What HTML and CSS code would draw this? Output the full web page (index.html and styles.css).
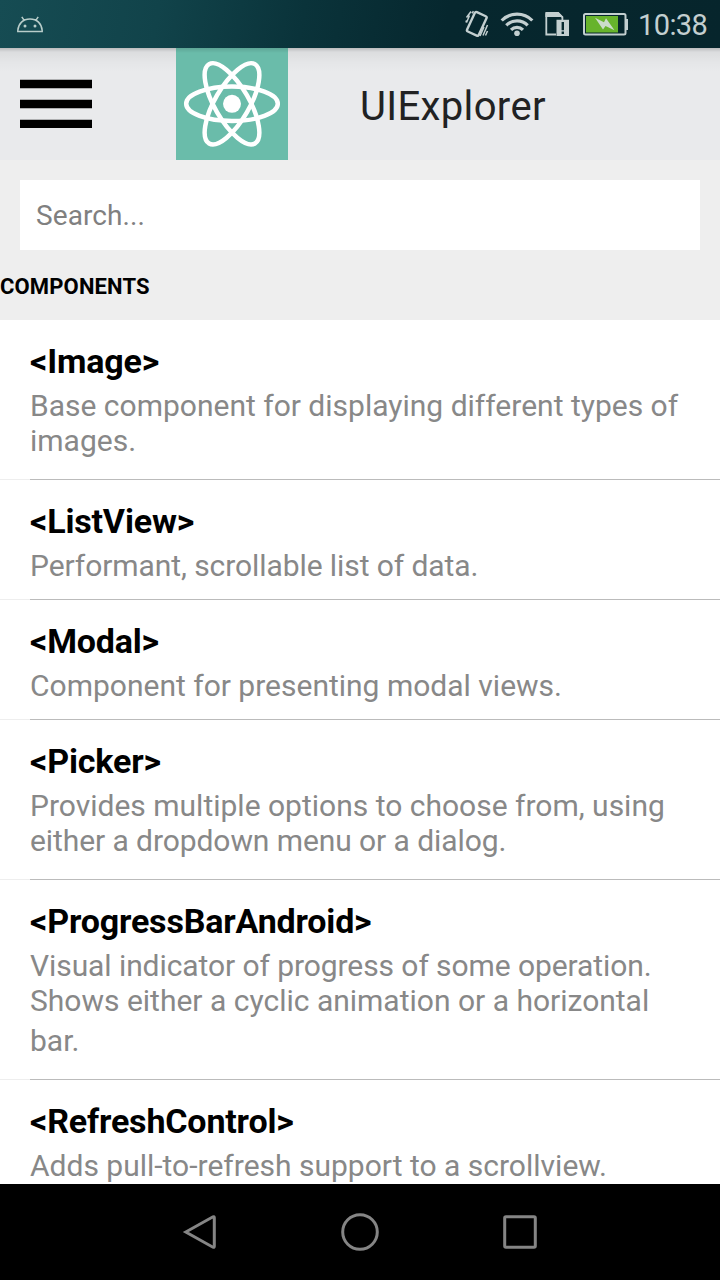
FILE: index.html
```html
<!DOCTYPE html>
<html lang="en">
<head>
<meta charset="utf-8">
<title>UIExplorer</title>
<link rel="stylesheet" href="styles.css">
</head>
<body>
<div class="screen">
  <header class="status">
    <svg class="status-icon" width="48" height="48" viewBox="0 0 48 48" fill="none" stroke="#b9cdca" stroke-width="1.500">
      <path d="M17.800 31.400V30.500C18.400 23.500 23 19 30 19s11.600 4.500 12.200 11.500v.9zM24 20.200l-2.200-3.400M36 20.200l2.200-3.400"/>
      <circle cx="25" cy="26" r="1.500" fill="#b9cdca" stroke="none"/>
      <circle cx="35" cy="26" r="1.500" fill="#b9cdca" stroke="none"/>
    </svg>
    <div class="status-right">
      <svg width="164" height="48" viewBox="464 0 164 48" fill="none" stroke="#c3cfd0">
        <rect x="470.400" y="13.200" width="12.800" height="21.400" rx="1.500" transform="rotate(25 476.800 23.900)" stroke-width="2.400"/>
        <path d="M471 11.500l-4.500 6M473.500 11.200l-1.500 2M466.500 20.500l-.5 2M469.500 15.500l-3 7M487.500 25l-4.500 10.500M487.500 31l-2 4.500M484 27l-4 9" stroke-width="1.500"/>
        <g stroke-width="3.200">
          <path d="M501.700 20.500a21.500 21.500 0 0 1 30.600 0"/>
          <path d="M506.300 25.300a15 15 0 0 1 21.400 0"/>
          <path d="M511 29.800a8.500 8.500 0 0 1 12 0"/>
        </g>
        <circle cx="517" cy="33.300" r="2.800" fill="#c3cfd0" stroke="none"/>
        <path d="M556 34.500h-9.700V13h11.700l4.400 4.400V20" stroke-width="1.800"/>
        <path d="M547 12h11.500l5 5H545.400v-3.400zM556.500 19.800H569V36h-12.500z" fill="#c3cfd0" stroke="none"/>
        <path d="M562.800 22v8.200M562.800 31.600v2.400" stroke="#06282e" stroke-width="2.400"/>
        <rect x="584" y="14" width="41.500" height="20.500" rx="1.500" stroke-width="2"/>
        <path d="M626 19h2v11h-2z" fill="#c3cfd0" stroke="none"/>
        <path d="M586 16h32v16.500h-32z" fill="#67b32c" stroke="none"/>
        <path d="M595 17.800l9 4.400 2-4 8.500 12-9-4.200-2.500 3.500z" fill="#cbdcc9" stroke="none"/>
      </svg>
      <span class="clock">10:38</span>
    </div>
  </header>

  <nav class="toolbar">
    <svg class="menu" width="72" height="52" viewBox="0 0 72 52">
      <path d="M0 3.700h72v8.500H0zM0 23.700h72v8.500H0zM0 43.700h72V52H0z"/>
    </svg>
    <svg class="logo" width="112" height="112" viewBox="0 0 112 112" fill="none" stroke="#fff" stroke-width="4.500">
      <ellipse cx="56" cy="55.800" rx="45.800" ry="17.200"/>
      <ellipse cx="56" cy="55.800" rx="45.800" ry="17.200" transform="rotate(60 56 55.800)"/>
      <ellipse cx="56" cy="55.800" rx="45.800" ry="17.200" transform="rotate(120 56 55.800)"/>
      <circle cx="56" cy="55.800" r="9" fill="#fff" stroke="none"/>
    </svg>
    <h1 class="title">UIExplorer</h1>
  </nav>

  <main class="content">
    <div class="search-area"><div class="search"><span>Search...</span></div></div>
    <h2 class="section"><span>COMPONENTS</span></h2>
    <section class="row">
      <h3><span>&lt;Image&gt;</span></h3>
      <p><span class="line">Base component for displaying different types of</span> <span class="line">images.</span></p>
    </section>
    <section class="row single">
      <h3><span>&lt;ListView&gt;</span></h3>
      <p><span class="line tight">Performant, scrollable list of data.</span></p>
    </section>
    <section class="row single">
      <h3><span>&lt;Modal&gt;</span></h3>
      <p><span class="line">Component for presenting modal views.</span></p>
    </section>
    <section class="row">
      <h3><span>&lt;Picker&gt;</span></h3>
      <p><span class="line">Provides multiple options to choose from, using</span> <span class="line tight">either a dropdown menu or a dialog.</span></p>
    </section>
    <section class="row">
      <h3><span>&lt;ProgressBarAndroid&gt;</span></h3>
      <p><span class="line tight">Visual indicator of progress of some operation.</span> <span class="line">Shows either a cyclic animation or a horizontal</span> <span class="line spaced">bar.</span></p>
    </section>
    <section class="row single">
      <h3><span>&lt;RefreshControl&gt;</span></h3>
      <p><span class="line">Adds pull-to-refresh support to a scrollview.</span></p>
    </section>
  </main>

  <footer class="navbar">
    <svg width="40" height="40" viewBox="0 0 40 40"><path d="M5.800 20L33 4.800q1.300-.5 1.300 1v28.400q0 1.500-1.300 1z"/></svg>
    <svg width="40" height="40" viewBox="0 0 40 40"><circle cx="20" cy="20" r="17.300"/></svg>
    <svg width="40" height="40" viewBox="0 0 40 40"><rect x="4.700" y="4.700" width="30.600" height="30.600" rx="1.300"/></svg>
  </footer>
</div>
</body>
</html>
```
FILE: styles.css
```css
* { box-sizing: border-box; }
body { margin: 0; font-family: Roboto, "Liberation Sans", sans-serif; }
h1, h2, h3, p { margin: 0; }
svg { display: block; flex: none; }

.screen {
  width: 720px;
  height: 1280px;
  display: flex;
  flex-direction: column;
  overflow: hidden;
  background: #fff;
}

.status {
  height: 48px;
  flex: none;
  display: flex;
  justify-content: space-between;
  background: linear-gradient(100deg, #164c53 0%, #11434a 22%, #0a333a 42%, #06272e 62%, #06252c 100%);
}
.status-right { display: flex; padding-right: 12px; gap: 10px; }
.clock {
  width: 70px;
  font-size: 29px;
  line-height: 51px;
  letter-spacing: -.6px;
  color: #c3cfd0;
  white-space: nowrap;
}

.toolbar {
  height: 112px;
  flex: none;
  display: flex;
  align-items: flex-start;
  padding-left: 20px;
  background: linear-gradient(rgba(0, 0, 0, .2), rgba(0, 0, 0, .06) 4px, rgba(0, 0, 0, .02) 14px, transparent 24px), #e9eaec;
}
.menu { margin-top: 28px; }
.logo {
  margin-left: 84px;
  background: linear-gradient(rgba(0, 0, 0, .12), transparent 5px), #6abcaa;
}
.title {
  margin-left: 72px;
  font-size: 40px;
  font-weight: 400;
  line-height: 118px;
  letter-spacing: .35px;
  color: #212223;
}

.content { flex: 1; min-height: 0; overflow: hidden; }
.search-area { padding: 20px 20px 10px; background: #eee; }
.search {
  height: 70px;
  padding-left: 16px;
  font-size: 28px;
  line-height: 72px;
  letter-spacing: .1px;
  color: #808080;
  background: #fff;
}
.section {
  height: 60px;
  font-size: 22px;
  line-height: 53px;
  letter-spacing: .15px;
  font-weight: 700;
  color: #000;
  background: #eee;
}

.row {
  padding: 21px 0 22px 30px;
  background: linear-gradient(90deg, #eee 30px, #bbb 30px) left bottom / 100% 1px no-repeat;
}
.single { padding-bottom: 17px; }
.row h3 {
  font-size: 34px;
  line-height: 40px;
  letter-spacing: -.17px;
  font-weight: 700;
  color: #000;
}
.row p { margin-top: 7px; font-size: 30px; line-height: 35px; color: #888; }
.line { display: block; width: max-content; }
.tight { letter-spacing: -.08px; }
.spaced { padding-top: 5px; }

.navbar {
  height: 96px;
  flex: none;
  display: flex;
  justify-content: center;
  align-items: center;
  gap: 120px;
  background: #000;
}
.navbar svg { fill: none; stroke: #858585; stroke-width: 3; }
```
